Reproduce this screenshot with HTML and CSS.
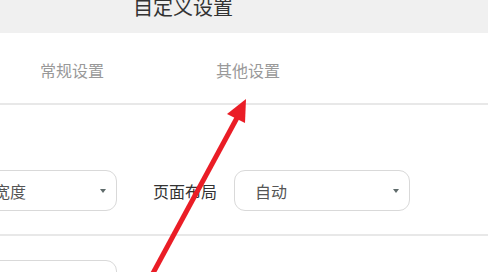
FILE: index.html
```html
<!DOCTYPE html>
<html lang="zh-CN">
<head>
	<meta charset="UTF-8">
	<title>自定义设置</title>
	<link rel="stylesheet" href="styles.css">
</head>
<body>
	<div class="header">
		<h1 class="header__title">自定义设置</h1>
	</div>

	<div class="tabs">
		<div class="tabs__item">常规设置</div>
		<div class="tabs__item">其他设置</div>
	</div>

	<div class="row">
		<div class="select select--shifted">
			<span class="select__value">固定宽度</span>
			<span class="select__caret"></span>
		</div>
		<span class="row__label">页面布局</span>
		<div class="select">
			<span class="select__value">自动</span>
			<span class="select__caret"></span>
		</div>
	</div>

	<div class="row row--last">
		<div class="select select--shifted"></div>
	</div>

	<svg class="arrow" width="488" height="272" viewBox="0 0 488 272">
		<line x1="152" y1="275" x2="238" y2="116" stroke="#ea1d26" stroke-width="5"/>
		<polygon points="246,99 227,114 245,123" fill="#ea1d26"/>
	</svg>
</body>
</html>
```

FILE: styles.css
```css
body {
	font-family: "Noto Sans CJK SC", sans-serif;
	font-size: 16px;
	margin: 0;
	height: 272px;
	overflow: hidden;
	position: relative;
	background: #fff;
}

.header {
	height: 33px;
	background: #f0f0f0;
	overflow: hidden;
}
.header__title {
	margin: -7px 0 0 133px;
	font-size: 20px;
	font-weight: normal;
	line-height: 28px;
	color: #333;
}

.tabs {
	display: flex;
	height: 70px;
	align-items: center;
	padding-left: 40px;
	gap: 112px;
	border-bottom: 2px solid #e8e8e8;
}
.tabs__item {
	color: #999;
	line-height: 20px;
	padding-top: 3px;
}

.row {
	display: flex;
	align-items: center;
	padding: 65px 0 23px;
	border-bottom: 2px solid #e8e8e8;
}
.row--last {
	border-bottom: none;
	padding: 24px 0 0;
}
.row__label {
	color: #333;
	margin: 0 17px 0 36px;
}

.select {
	box-sizing: border-box;
	width: 176px;
	height: 41px;
	border: 1px solid #d9d9d9;
	border-radius: 11px;
	display: flex;
	align-items: center;
	padding: 0 10px 0 20px;
	flex-shrink: 0;
}
.select--shifted {
	margin-left: -59px;
}
.select__value {
	flex: 1;
	color: #555;
}
.select__caret {
	width: 0;
	height: 0;
	border-left: 3.5px solid transparent;
	border-right: 3.5px solid transparent;
	border-top: 4px solid #5f6b6b;
}

.arrow {
	position: absolute;
	left: 0;
	top: 0;
}
```
